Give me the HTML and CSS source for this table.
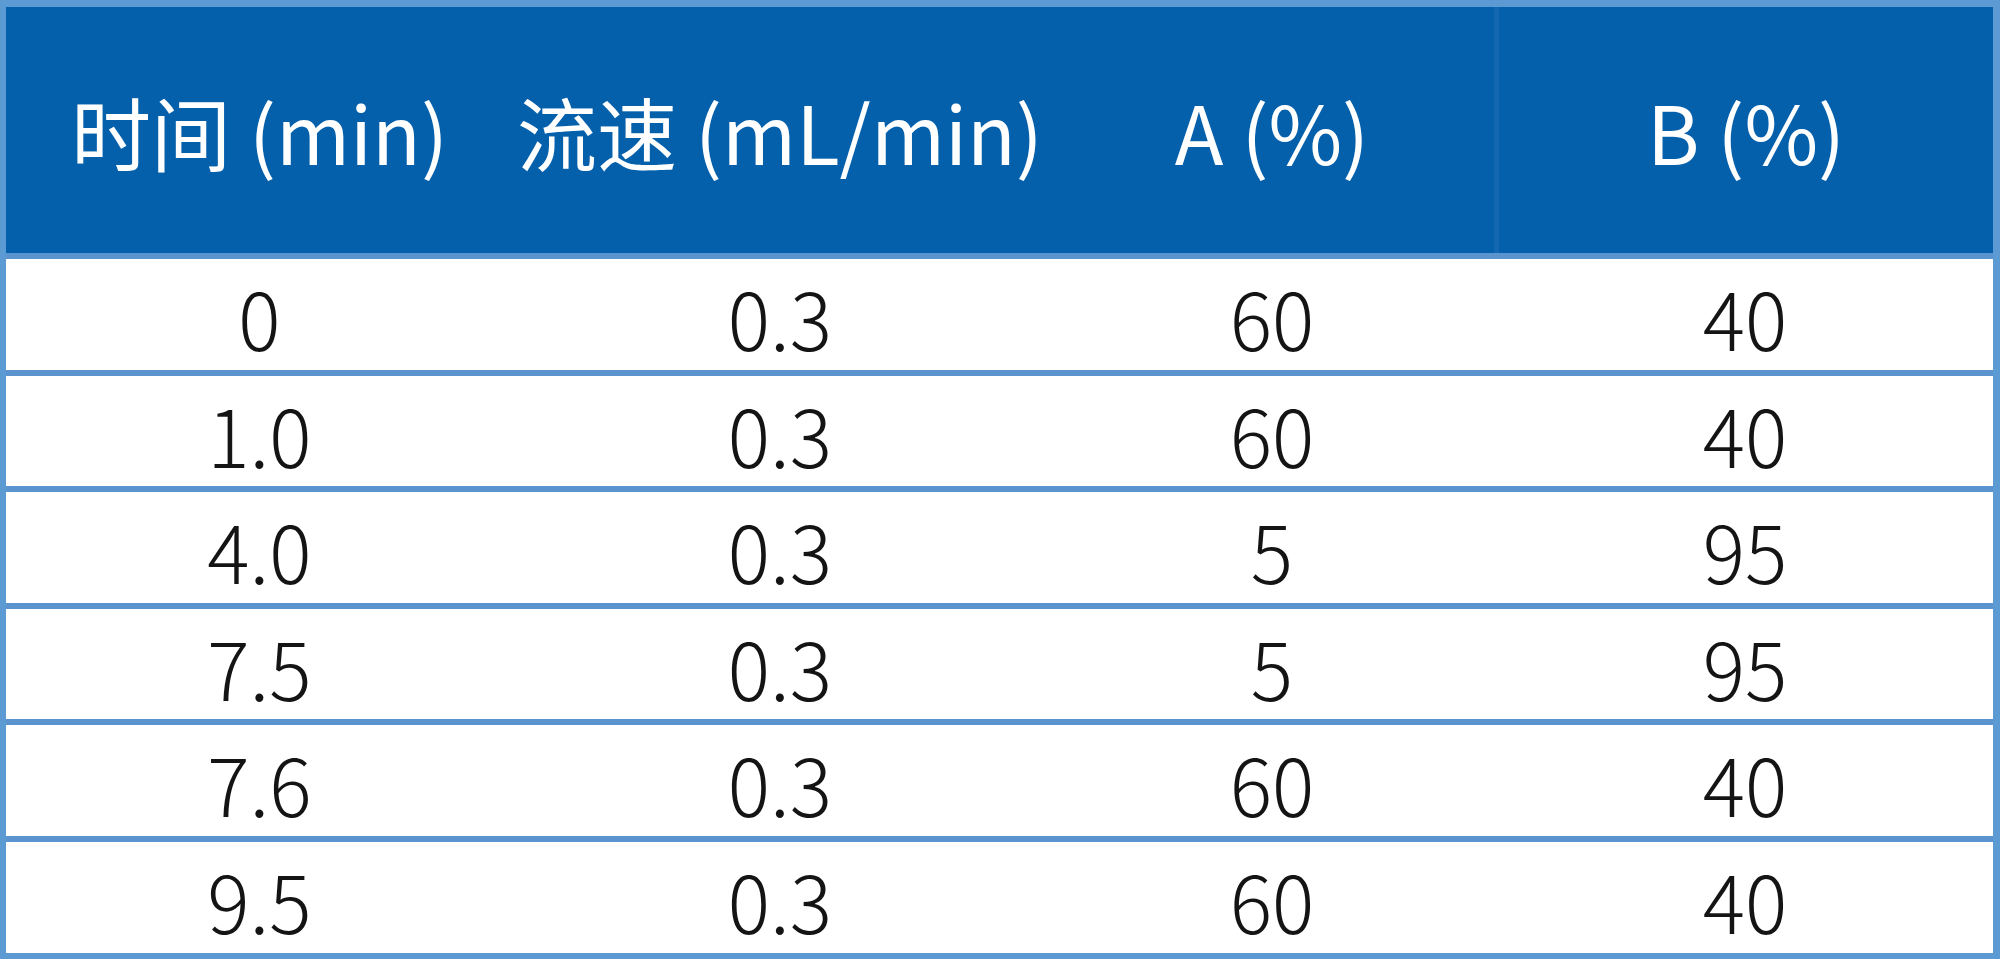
FILE: index.html
```html
<!DOCTYPE html>
<html lang="zh-CN">
<head>
<meta charset="utf-8">
<title>梯度洗脱表</title>
<link rel="stylesheet" href="styles.css">
</head>
<body>
<div class="table">
  <div class="row head">
    <div class="cell">时间 (min)</div>
    <div class="cell">流速 (mL/min)</div>
    <div class="cell">A (%)</div>
    <div class="cell split">B (%)</div>
  </div>
  <div class="row"><div class="cell">0</div><div class="cell">0.3</div><div class="cell">60</div><div class="cell">40</div></div>
  <div class="row"><div class="cell">1.0</div><div class="cell">0.3</div><div class="cell">60</div><div class="cell">40</div></div>
  <div class="row"><div class="cell">4.0</div><div class="cell">0.3</div><div class="cell">5</div><div class="cell">95</div></div>
  <div class="row"><div class="cell">7.5</div><div class="cell">0.3</div><div class="cell">5</div><div class="cell">95</div></div>
  <div class="row"><div class="cell">7.6</div><div class="cell">0.3</div><div class="cell">60</div><div class="cell">40</div></div>
  <div class="row"><div class="cell">9.5</div><div class="cell">0.3</div><div class="cell">60</div><div class="cell">40</div></div>
</div>
</body>
</html>
```

FILE: styles.css
```css
html, body {
  margin: 0;
  padding: 0;
  background: #ffffff;
}
body {
  width: 2000px;
  height: 959px;
  overflow: hidden;
  font-family: "Noto Sans CJK SC", "Noto Sans", sans-serif;
}
.table {
  box-sizing: border-box;
  width: 2000px;
  height: 959px;
  border-style: solid;
  border-color: #5c9ad4;
  border-width: 7px 7px 6px 6px;
  display: flex;
  flex-direction: column;
}
.row {
  display: grid;
  grid-template-columns: 507px 534px 450px 1fr;
  height: 110.5px;
  border-top: 6px solid #5b93cf;
  color: #141414;
  font-size: 79px;
  font-weight: 300;
}
.row .cell {
  padding-bottom: 5px;
}
.row.head {
  height: 246px;
  border-top: none;
  background: #0560ac;
  color: #ffffff;
  font-size: 80px;
  font-weight: 400;
}
.row.head .cell {
  padding-bottom: 0;
}
.cell {
  box-sizing: border-box;
  display: flex;
  align-items: center;
  justify-content: center;
  white-space: nowrap;
}
.cell.split {
  border-left: 5px solid #1366b0;
  margin-left: -3px;
}
```
